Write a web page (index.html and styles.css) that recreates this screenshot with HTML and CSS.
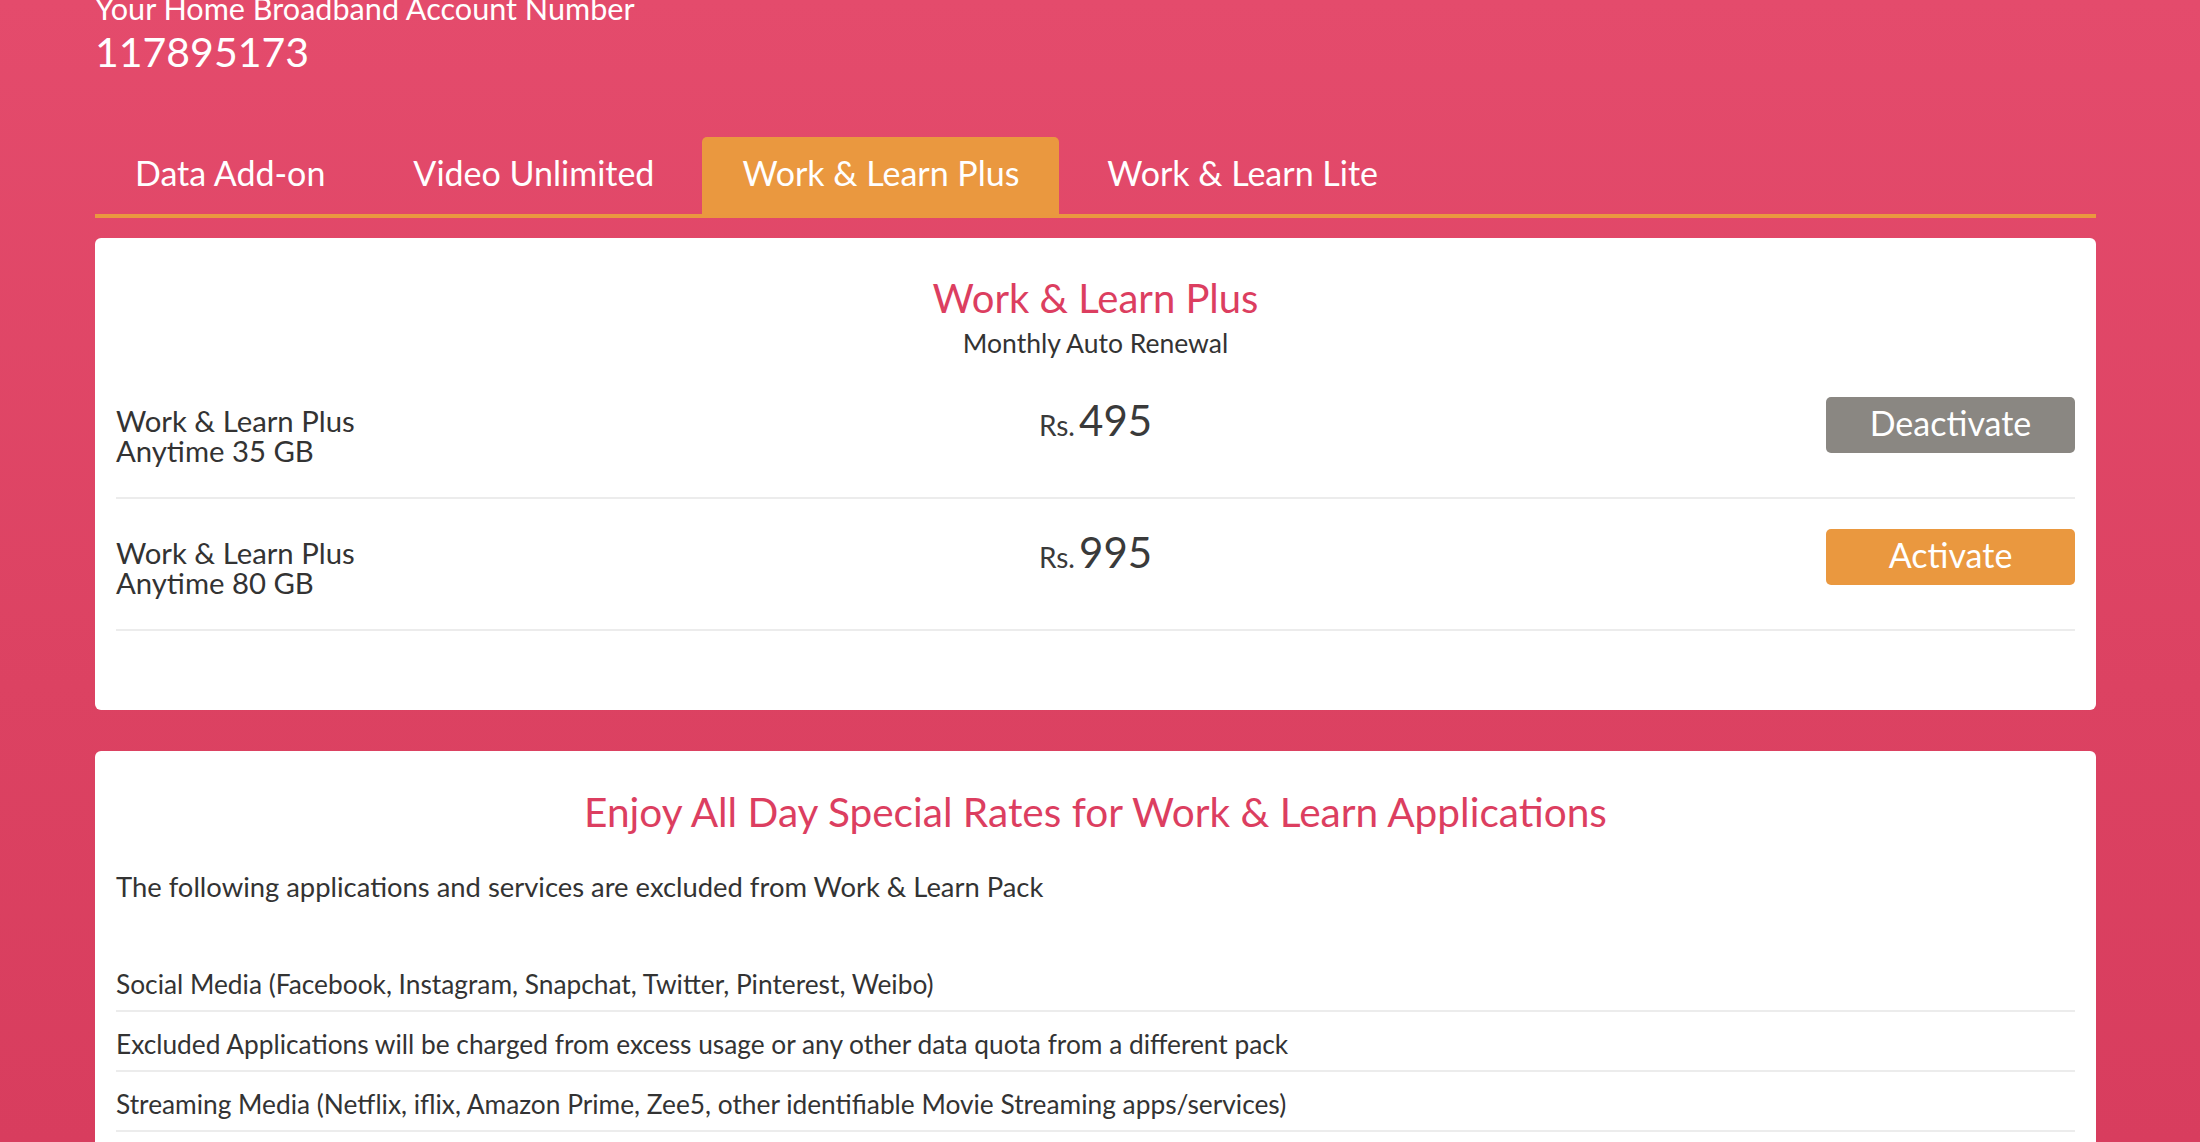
FILE: index.html
```html
<!DOCTYPE html>
<html lang="en">
<head>
<meta charset="utf-8">
<title>Work &amp; Learn Plus</title>
<link rel="stylesheet" href="styles.css">
</head>
<body>
<div class="page">
  <div class="container">
    <header class="account">
      <div class="account-label">Your Home Broadband Account Number</div>
      <div class="account-number">117895173</div>
    </header>

    <nav class="tabs">
      <a class="tab">Data Add-on</a>
      <a class="tab">Video Unlimited</a>
      <a class="tab tab-active">Work &amp; Learn Plus</a>
      <a class="tab">Work &amp; Learn Lite</a>
    </nav>

    <section class="card plans">
      <div class="card-head">
        <h2 class="card-title">Work &amp; Learn Plus</h2>
        <div class="card-sub">Monthly Auto Renewal</div>
      </div>
      <div class="plan-row">
        <div class="plan-name">
          <div class="plan-line">Work &amp; Learn Plus</div>
          <div class="plan-line">Anytime 35 GB</div>
        </div>
        <div class="plan-price"><span class="cur">Rs.</span> <span class="amt">495</span></div>
        <div class="plan-action"><button class="btn btn-gray">Deactivate</button></div>
      </div>
      <div class="plan-row">
        <div class="plan-name">
          <div class="plan-line">Work &amp; Learn Plus</div>
          <div class="plan-line">Anytime 80 GB</div>
        </div>
        <div class="plan-price"><span class="cur">Rs.</span> <span class="amt">995</span></div>
        <div class="plan-action"><button class="btn btn-orange">Activate</button></div>
      </div>
    </section>

    <section class="card info">
      <h2 class="card-title card-title-wide">Enjoy All Day Special Rates for Work &amp; Learn Applications</h2>
      <p class="info-intro">The following applications and services are excluded from Work &amp; Learn Pack</p>
      <ul class="info-list">
        <li>Social Media (Facebook, Instagram, Snapchat, Twitter, Pinterest, Weibo)</li>
        <li>Excluded Applications will be charged from excess usage or any other data quota from a different pack</li>
        <li>Streaming Media (Netflix, iflix, Amazon Prime, Zee5, other identifiable Movie Streaming apps/services)</li>
      </ul>
    </section>
  </div>
</div>
</body>
</html>
```
FILE: styles.css
```css
* { box-sizing: border-box; }
html, body { margin: 0; padding: 0; }
body {
  font-family: "Lato", "Noto Sans", sans-serif;
  color: #333;
}
.page {
  height: 100vh;
  overflow: hidden;
  background: linear-gradient(180deg, #e44b6c 0%, #dc4262 60%, #d83d5e 100%);
}
.container {
  width: 2001px;
  margin-left: 95px;
}

/* header */
.account { color: #fff; }
.account-label {
  font-size: 30.6px;
  line-height: 18px;
}
.account-number {
  font-size: 41px;
  line-height: 50px;
  margin-top: 9px;
}

/* tabs */
.tabs {
  display: flex;
  gap: 8px;
  margin-top: 60px;
  border-bottom: 4px solid #ea983f;
}
.tab {
  display: block;
  color: #fff;
  font-size: 34px;
  line-height: 41px;
  padding: 15px 40px 21px;
  border-radius: 5px 5px 0 0;
  cursor: pointer;
}
.tab-active { background: #ea983f; }

/* cards */
.card {
  background: #fff;
  border-radius: 6px;
  padding: 36px 21px 0;
}
.plans {
  margin-top: 20px;
  padding-bottom: 79px;
}
.card-title {
  margin: 0;
  font-weight: 400;
  font-size: 40px;
  line-height: 48px;
  color: #dc3e60;
  text-align: center;
}
.card-title-wide { font-size: 40.6px; }
.card-sub {
  text-align: center;
  font-size: 26.5px;
  line-height: 32px;
  margin-top: 5px;
  color: #333;
}
.card-head { padding-bottom: 8px; }

.plan-row {
  display: flex;
  align-items: flex-start;
  padding: 30px 0 31px;
  border-bottom: 2px solid #ececec;
}
.plan-name {
  flex: 1;
  margin-top: 9px;
  font-size: 29.3px;
  color: #333;
}
.plan-line {
  line-height: 30px;
}
.plan-price {
  flex: 0 0 auto;
  padding-top: 3px;
  line-height: 40px;
  color: #3a3a3a;
  white-space: nowrap;
}
.cur { font-size: 28px; }
.amt { font-size: 42px; }
.plan-action {
  flex: 1;
  display: flex;
  justify-content: flex-end;
}
.btn {
  width: 249px;
  height: 56px;
  padding: 0 0 5px;
  border: 0;
  border-radius: 5px;
  color: #fff;
  font-family: inherit;
  font-size: 34px;
  line-height: 50px;
  cursor: pointer;
}
.btn-gray { background: #8a8782; }
.btn-orange { background: #ea983f; }

/* info card */
.info {
  margin-top: 41px;
  padding-top: 37px;
  padding-bottom: 60px;
}
.info-intro {
  margin: 35px 0 0;
  font-size: 27.4px;
  line-height: 32px;
  color: #333;
}
.info-list {
  list-style: none;
  margin: 49px 0 0;
  padding: 0;
}
.info-list li {
  font-size: 26.3px;
  line-height: 32px;
  padding: 16px 0 10px;
  border-bottom: 2px solid #ececec;
  color: #333;
}
```
